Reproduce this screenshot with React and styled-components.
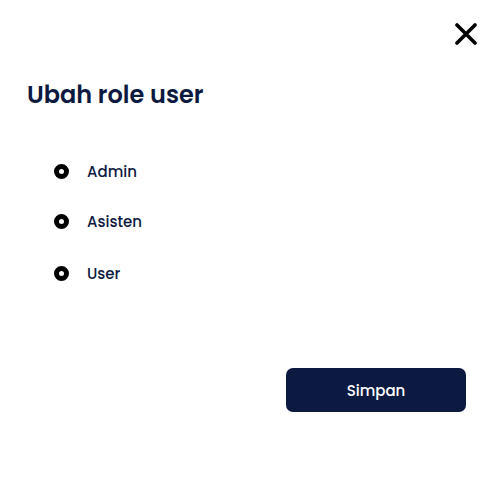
import React, { useState } from 'react'
import styled, { createGlobalStyle } from 'styled-components'

const Global = createGlobalStyle`
  html, body { margin: 0; padding: 0; background: #fff; }
  body { font-family: Poppins, Inter, "Noto Sans", sans-serif; }
`

const Modal = styled.div`
  width: 500px;
  height: 500px;
  box-sizing: border-box;
  padding: 22px 24px 0 27px;
  display: flex;
  flex-direction: column;
`

const TopBar = styled.div`
  display: flex;
  justify-content: flex-end;
`

const CloseButton = styled.button`
  width: 24px;
  height: 24px;
  padding: 0;
  border: none;
  background: none;
  display: flex;
  align-items: center;
  justify-content: center;
  cursor: pointer;
  margin-right: -2px;
`

const Title = styled.h2`
  margin: 31px 0 0;
  font-size: 24px;
  line-height: 36px;
  font-weight: 600;
  color: #0c1940;
`

const Options = styled.div`
  margin: 47px 0 0 27px;
  display: flex;
  flex-direction: column;
`

const Option = styled.label`
  display: flex;
  align-items: center;
  gap: 18px;
  height: 22px;
  margin-bottom: ${p => p.$gap}px;
  font-size: 15px;
  font-weight: 500;
  color: #0c1940;
  cursor: pointer;
`

const Dot = styled.span`
  width: 15px;
  height: 15px;
  box-sizing: border-box;
  border-radius: 50%;
  border: 5px solid #000;
  background: #fff;
  flex-shrink: 0;
`

const Footer = styled.div`
  display: flex;
  justify-content: flex-end;
  margin-top: 84px;
  margin-right: 10px;
`

const SaveButton = styled.button`
  width: 180px;
  height: 44px;
  border: none;
  border-radius: 7px;
  background: #0c1940;
  color: #fff;
  font-family: inherit;
  font-size: 15px;
  font-weight: 500;
  cursor: pointer;
`

const roles = [
  { name: 'Admin', gap: 28 },
  { name: 'Asisten', gap: 30 },
  { name: 'User', gap: 0 },
]

export default function App() {
  const [role, setRole] = useState(null)
  return (
    <>
      <Global />
      <Modal>
        <TopBar>
          <CloseButton aria-label='close'>
            <svg width='22' height='22' viewBox='0 0 22 22'>
              <path d='M2 2 L20 20 M20 2 L2 20' stroke='#000' strokeWidth='3.6' strokeLinecap='round' />
            </svg>
          </CloseButton>
        </TopBar>
        <Title>Ubah role user</Title>
        <Options>
          {roles.map(r => (
            <Option key={r.name} $gap={r.gap} onClick={() => setRole(r.name)}>
              <Dot />
              {r.name}
            </Option>
          ))}
        </Options>
        <Footer>
          <SaveButton>Simpan</SaveButton>
        </Footer>
      </Modal>
    </>
  )
}
